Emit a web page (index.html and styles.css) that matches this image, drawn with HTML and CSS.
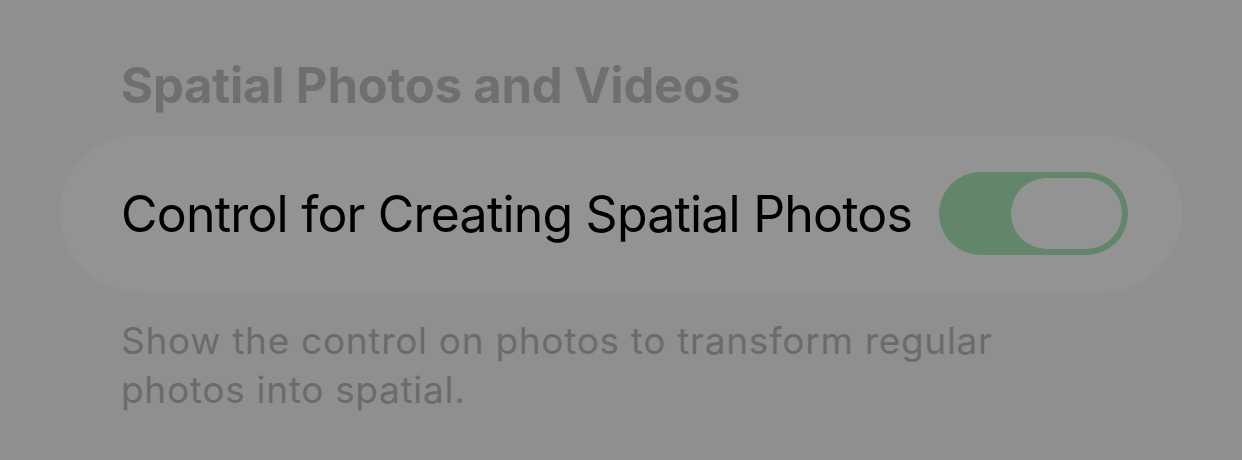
FILE: index.html
```html
<!DOCTYPE html>
<html>
<head>
<meta charset="utf-8">
<link rel="stylesheet" href="styles.css">
</head>
<body>
<main class="page">
  <h2 class="section-header">Spatial Photos and Videos</h2>
  <div class="card">
    <span class="row-label">Control for Creating Spatial Photos</span>
    <div class="toggle"><div class="knob"></div></div>
  </div>
  <p class="section-footer">Show the control on photos to transform regular photos into spatial.</p>
</main>
</body>
</html>
```
FILE: styles.css
```css
html, body {
  margin: 0;
  padding: 0;
  background: #8f8f8f;
  width: 1242px;
  height: 460px;
  overflow: hidden;
  font-family: Inter, "Noto Sans", "Liberation Sans", sans-serif;
}
.page {
  padding: 0 60px;
  display: flex;
  flex-direction: column;
}
.section-header {
  margin: 56px 0 0 61px;
  font-size: 49px;
  line-height: 60px;
  font-weight: 700;
  color: #6f6f6f;
  letter-spacing: -0.2px;
}
.card {
  margin-top: 19px;
  height: 157px;
  width: 1122px;
  box-sizing: border-box;
  border-radius: 79px;
  background: #939393;
  display: flex;
  align-items: center;
  padding: 0 54px 0 61px;
  justify-content: space-between;
}
.row-label {
  font-size: 50px;
  color: #000;
  font-weight: 400;
  letter-spacing: -0.8px;
}
.toggle {
  width: 189px;
  height: 83px;
  border-radius: 42px;
  background: #63866a;
  display: flex;
  align-items: center;
  justify-content: flex-end;
  padding-right: 6px;
  box-sizing: border-box;
}
.knob {
  width: 111px;
  height: 71px;
  border-radius: 36px;
  background: #939393;
}
.section-footer {
  margin: 24px 0 0 61px;
  width: 960px;
  font-size: 37px;
  line-height: 49px;
  color: #6b6b6b;
  letter-spacing: 0.7px;
}
```
